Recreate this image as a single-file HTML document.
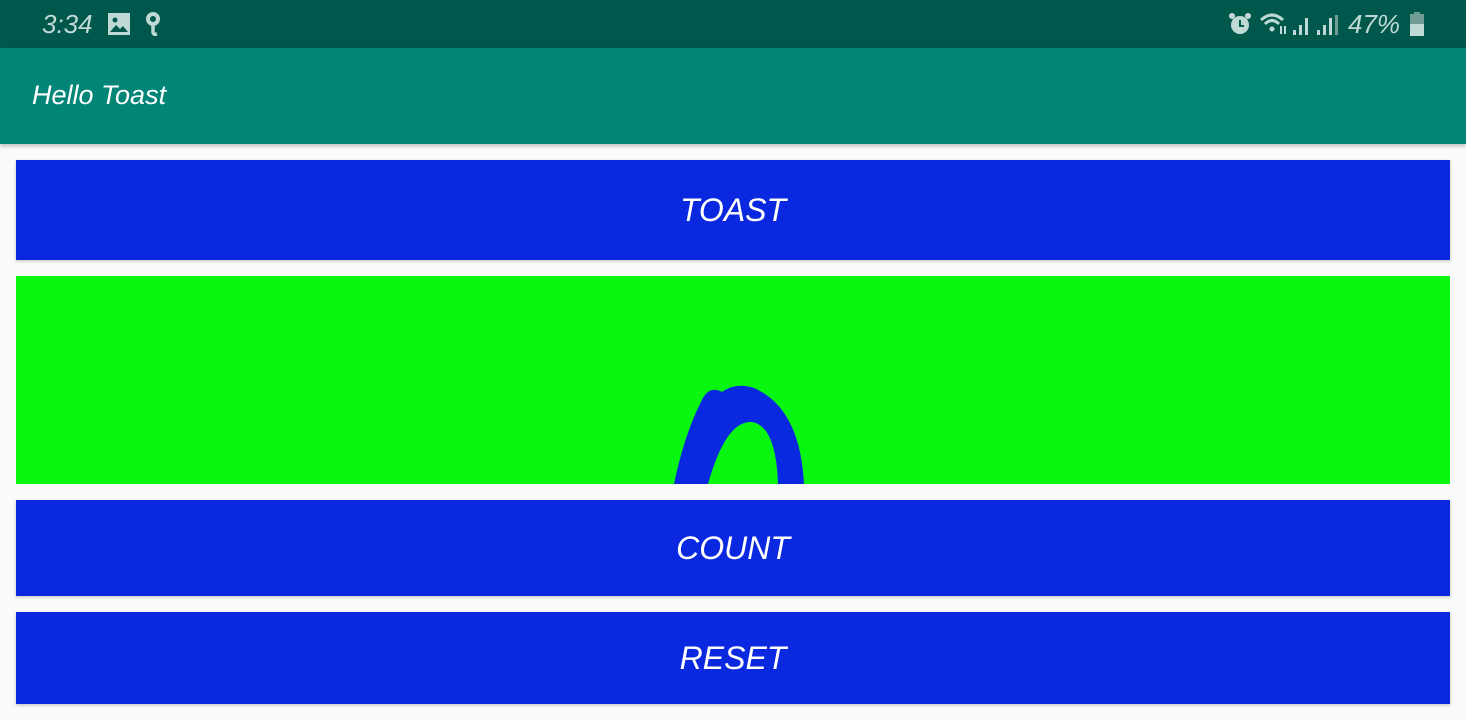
<!DOCTYPE html>
<html><head><meta charset="utf-8"><style>
*{margin:0;padding:0;box-sizing:border-box}
body{width:1466px;height:720px;background:#fafafa;font-family:"Liberation Sans",sans-serif;position:relative;overflow:hidden}
.sb{position:absolute;left:0;top:0;width:1466px;height:48px;background:#00574b;color:#bfd9d4}
.ab{position:absolute;left:0;top:48px;width:1466px;height:96px;background:#008577;box-shadow:0 2px 4px rgba(0,0,0,.25)}
.ab span{position:absolute;left:32px;top:32px;color:#fff;font-size:27px;font-style:italic}
.btn{position:absolute;left:16px;width:1434px;background:#0a28e0;color:#fff;font-size:32px;font-style:italic;display:flex;align-items:center;justify-content:center;box-shadow:0 1px 3px rgba(0,0,0,.25)}
.green{position:absolute;left:16px;top:276px;width:1434px;height:208px;background:#08f610;overflow:hidden}
</style></head><body>
<div class="sb">
<span style="position:absolute;left:42px;top:9px;font-size:26px;font-style:italic">3:34</span>
<svg style="position:absolute;left:108px;top:13px" width="22" height="22" viewBox="0 0 22 22"><rect x="0" y="0" width="22" height="22" fill="#bfd9d4"/><circle cx="7" cy="7" r="2.5" fill="#00574b"/><path d="M2 19 L8 12 L12 16 L15 13 L20 19Z" fill="#00574b"/></svg>
<svg style="position:absolute;left:145px;top:12px" width="16" height="24" viewBox="0 0 16 24"><circle cx="8" cy="7" r="5" fill="none" stroke="#bfd9d4" stroke-width="4"/><path d="M8 12 L8 20 Q8 23 12 22" fill="none" stroke="#bfd9d4" stroke-width="3.5"/></svg>
<svg style="position:absolute;left:1228px;top:12px" width="24" height="24" viewBox="0 0 24 24"><circle cx="12" cy="13" r="9" fill="#bfd9d4"/><path d="M12 8v6h4" stroke="#00574b" stroke-width="2" fill="none"/><circle cx="4" cy="4" r="3" fill="#bfd9d4"/><circle cx="20" cy="4" r="3" fill="#bfd9d4"/></svg>
<svg style="position:absolute;left:1259px;top:12px" width="30" height="24" viewBox="0 0 30 24"><path d="M2 8 Q13 -2 24 8" stroke="#bfd9d4" stroke-width="3" fill="none"/><path d="M6 12 Q13 5 20 12" stroke="#bfd9d4" stroke-width="3" fill="none"/><circle cx="13" cy="17" r="2.5" fill="#bfd9d4"/><path d="M22 14v8M26 14v8" stroke="#bfd9d4" stroke-width="2"/></svg>
<svg style="position:absolute;left:1293px;top:14px" width="50" height="22" viewBox="0 0 50 22"><rect x="0" y="16" width="3" height="5" fill="#bfd9d4"/><rect x="6" y="11" width="3" height="10" fill="#bfd9d4"/><rect x="12" y="4" width="3" height="17" fill="#bfd9d4"/><rect x="24" y="16" width="3" height="5" fill="#bfd9d4"/><rect x="30" y="11" width="3" height="10" fill="#bfd9d4"/><rect x="36" y="4" width="3" height="17" fill="#bfd9d4"/><rect x="42" y="1" width="3" height="20" fill="#6f9c94"/></svg>
<span style="position:absolute;left:1348px;top:9px;font-size:26px;font-style:italic">47%</span>
<svg style="position:absolute;left:1410px;top:12px" width="14" height="24" viewBox="0 0 14 24"><rect x="4" y="0" width="6" height="3" fill="#6f9c94"/><rect x="0" y="2" width="14" height="10" fill="#6f9c94"/><rect x="0" y="12" width="14" height="12" fill="#bfd9d4"/></svg>
</div>
<div class="ab"><span>Hello Toast</span></div>
<div class="btn" style="top:160px;height:100px">TOAST</div>
<div class="green"><svg style="position:absolute;left:620px;top:100px" width="200" height="120" viewBox="0 0 200 120"><path d="M38 108 Q48 60 64 28 Q72 8 86 16 Q100 6 118 12 Q164 32 168 108 L142 108 Q140 50 116 46 Q90 44 72 108Z" fill="#0a28e0"/></svg></div>
<div class="btn" style="top:500px;height:96px">COUNT</div>
<div class="btn" style="top:612px;height:92px">RESET</div>
</body></html>
